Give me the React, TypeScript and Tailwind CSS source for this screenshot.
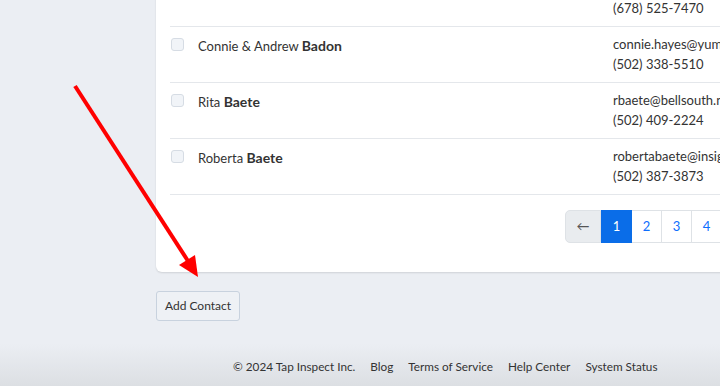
import React from 'react'

type Contact = { first: string; last: string; email: string; phone: string }

const contacts: Contact[] = [
  { first: 'Connie & Andrew', last: 'Badon', email: 'connie.hayes@yumpu.com', phone: '(502) 338-5510' },
  { first: 'Rita', last: 'Baete', email: 'rbaete@bellsouth.net', phone: '(502) 409-2224' },
  { first: 'Roberta', last: 'Baete', email: 'robertabaete@insightbb.com', phone: '(502) 387-3873' },
]

// ── one contact row ──
function Row({ c }: { c: Contact }) {
  return (
    <div className="flex h-[56px] border-b border-[#e4e7eb] text-[13px] text-[#333]">
      <div className="w-[28px] pt-[11px] pl-[1px]">
        <span className="block h-[13px] w-[13px] rounded-[3px] border border-[#d6dce4] bg-[#f1f4f8]" />
      </div>
      <div className="w-[415px] pt-[9px] leading-[20px]">
        {c.first} <span className="text-[14px] font-bold">{c.last}</span>
      </div>
      <div className="flex flex-col pt-[7px] leading-[20px] whitespace-nowrap">
        <span>{c.email || '\u00a0'}</span>
        <span>{c.phone}</span>
      </div>
    </div>
  )
}

function Pagination() {
  const pages = [1, 2, 3, 4, 5]
  return (
    <div className="flex h-[33px] text-[13px]">
      <div className="flex w-[36px] items-center justify-center rounded-l-[5px] border border-[#dee2e6] bg-[#e9ecef] text-[#555]">
        ←
      </div>
      {pages.map(p => (
        <div
          key={p}
          className={
            p === 1
              ? 'flex w-[31px] items-center justify-center bg-[#0a6de8] text-white'
              : 'flex w-[30px] items-center justify-center border border-l-0 border-[#dee2e6] bg-white text-[#0d6efd]'
          }
        >
          {p}
        </div>
      ))}
    </div>
  )
}

function Arrow() {
  return (
    <svg className="pointer-events-none absolute left-0 top-0" width="720" height="386">
      <line x1="75" y1="86" x2="188" y2="261" stroke="#ff0000" strokeWidth="4" />
      <polygon points="198,277 179,265 195,255" fill="#ff0000" />
    </svg>
  )
}

export default function App() {
  return (
    <div
      className="relative flex h-[386px] w-[720px] flex-col overflow-hidden bg-[#ebeef3]"
      style={{ fontFamily: 'Lato, "Noto Sans", sans-serif' }}
    >
      <div className="pl-[156px]">
        <div className="w-[640px] rounded-b-[6px] bg-white pb-[29px] pl-[14px] shadow-[0_1px_2px_rgba(0,0,0,0.12)]">
          <div className="-mt-[29px]">
            <Row c={{ first: '', last: '', email: '', phone: '(678) 525-7470' }} />
            {contacts.map(c => (
              <Row key={c.email} c={c} />
            ))}
          </div>
          <div className="mt-[15px] pl-[395px]">
            <Pagination />
          </div>
        </div>

        <button className="mt-[19px] h-[30px] w-[84px] rounded-[3px] border border-[#c8d2de] bg-[#eef1f5] text-[12px] text-[#333]">
          Add Contact
        </button>
      </div>

      <footer className="mt-auto flex h-[42px] items-center gap-[15px] bg-linear-to-b from-[#ebeef3] to-[#dcdfe3] pt-[4px] pl-[233px] text-[11.75px] text-[#333]">
        <span>© 2024 Tap Inspect Inc.</span>
        <span>Blog</span>
        <span>Terms of Service</span>
        <span>Help Center</span>
        <span>System Status</span>
      </footer>

      <Arrow />
    </div>
  )
}
